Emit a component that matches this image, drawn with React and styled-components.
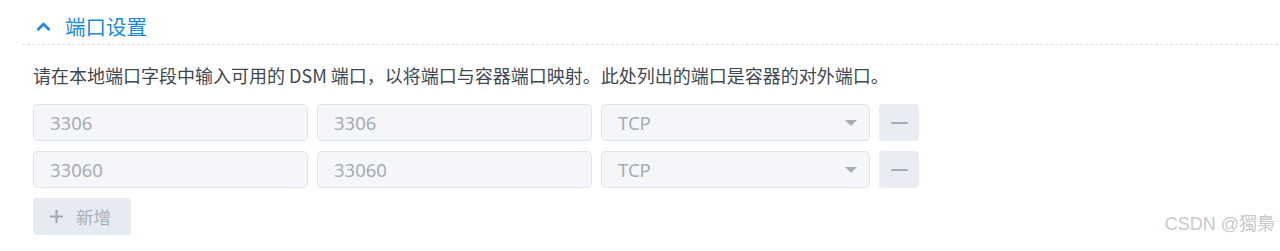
import styled, { createGlobalStyle } from "styled-components";

const GlobalStyle = createGlobalStyle`
  body {
    margin: 0;
    background: #fff;
    font-family: "Noto Sans", "Noto Sans CJK SC", sans-serif;
  }
`;

const rows = [
  { local: "3306", container: "3306", proto: "TCP" },
  { local: "33060", container: "33060", proto: "TCP" },
];

const App = () => {
  return (
    <Page>
      <GlobalStyle />
      <Section>
        <Header>
          <svg width="15" height="11" viewBox="0 0 15 11">
            <path d="M1.5 9 L7.5 3 L13.5 9" fill="none" stroke="#1a8ae0" strokeWidth="2.6" />
          </svg>
          <span>端口设置</span>
        </Header>
        <Body>
          <Desc>请在本地端口字段中输入可用的 DSM 端口，以将端口与容器端口映射。此处列出的端口是容器的对外端口。</Desc>
          <Rows>
            {rows.map((r, i) => (
              <Row key={i}>
                <Field>{r.local}</Field>
                <Field>{r.container}</Field>
                <Select>
                  {r.proto}
                  <Caret />
                </Select>
                <IconButton>
                  <Dash />
                </IconButton>
              </Row>
            ))}
            <AddButton>
              <svg width="15" height="15" viewBox="0 0 15 15">
                <path d="M7.5 1 V14 M1 7.5 H14" stroke="#a3a9b1" strokeWidth="2.2" />
              </svg>
              <span>新增</span>
            </AddButton>
          </Rows>
        </Body>
      </Section>
      <Watermark>CSDN @獨梟</Watermark>
    </Page>
  );
};

const Page = styled.div`
  position: relative;
  width: 1280px;
  height: 251px;
  overflow: hidden;
`;

const Section = styled.div`
  margin-left: 22px;
  margin-right: 2px;
  padding-top: 9px;
`;

const Header = styled.div`
  display: flex;
  align-items: center;
  gap: 14px;
  height: 35px;
  padding-left: 14px;
  border-bottom: 1px dashed #d5e0ec;
  span {
    color: #1a8ae0;
    font-size: 20.5px;
    font-family: "Noto Sans CJK SC", sans-serif;
    line-height: 1;
  }
`;

const Body = styled.div`
  padding-left: 11px;
  padding-top: 19px;
`;

const Desc = styled.div`
  font-size: 18px;
  color: #3f4852;
  font-family: "Noto Sans CJK SC", sans-serif;
  line-height: 22px;
`;

const Rows = styled.div`
  display: flex;
  flex-direction: column;
  align-items: flex-start;
  gap: 10px;
  margin-top: 18px;
`;

const Row = styled.div`
  display: flex;
  gap: 9px;
`;

const Field = styled.div`
  box-sizing: border-box;
  width: 275px;
  height: 37px;
  display: flex;
  align-items: center;
  padding: 0 16px;
  background: #f5f6fa;
  border: 1px solid #dde3ea;
  border-radius: 5px;
  color: #a6acb3;
  font-size: 18.5px;
`;

const Select = styled(Field)`
  width: 269px;
  justify-content: space-between;
  padding-right: 12px;
`;

const Caret = styled.span`
  width: 0;
  height: 0;
  border-left: 6px solid transparent;
  border-right: 6px solid transparent;
  border-top: 6px solid #a8adb4;
`;

const IconButton = styled.div`
  width: 40px;
  height: 37px;
  border-radius: 4px;
  background: #e9edf3;
  display: flex;
  align-items: center;
  justify-content: center;
`;

const Dash = styled.span`
  width: 17px;
  height: 2px;
  background: #a6abb2;
  border-radius: 1px;
`;

const AddButton = styled.div`
  box-sizing: border-box;
  width: 98px;
  height: 37px;
  border-radius: 4px;
  background: #e6ebf2;
  display: flex;
  align-items: center;
  gap: 12px;
  padding-left: 16px;
  span {
    color: #a9b0b9;
    font-size: 17.5px;
    font-family: "Noto Sans CJK SC", sans-serif;
  }
`;

const Watermark = styled.div`
  position: absolute;
  right: 5px;
  top: 209px;
  font-family: "Liberation Sans", "Noto Sans CJK TC", sans-serif;
  font-size: 18px;
  color: #c9c9c9;
`;

export default App;
